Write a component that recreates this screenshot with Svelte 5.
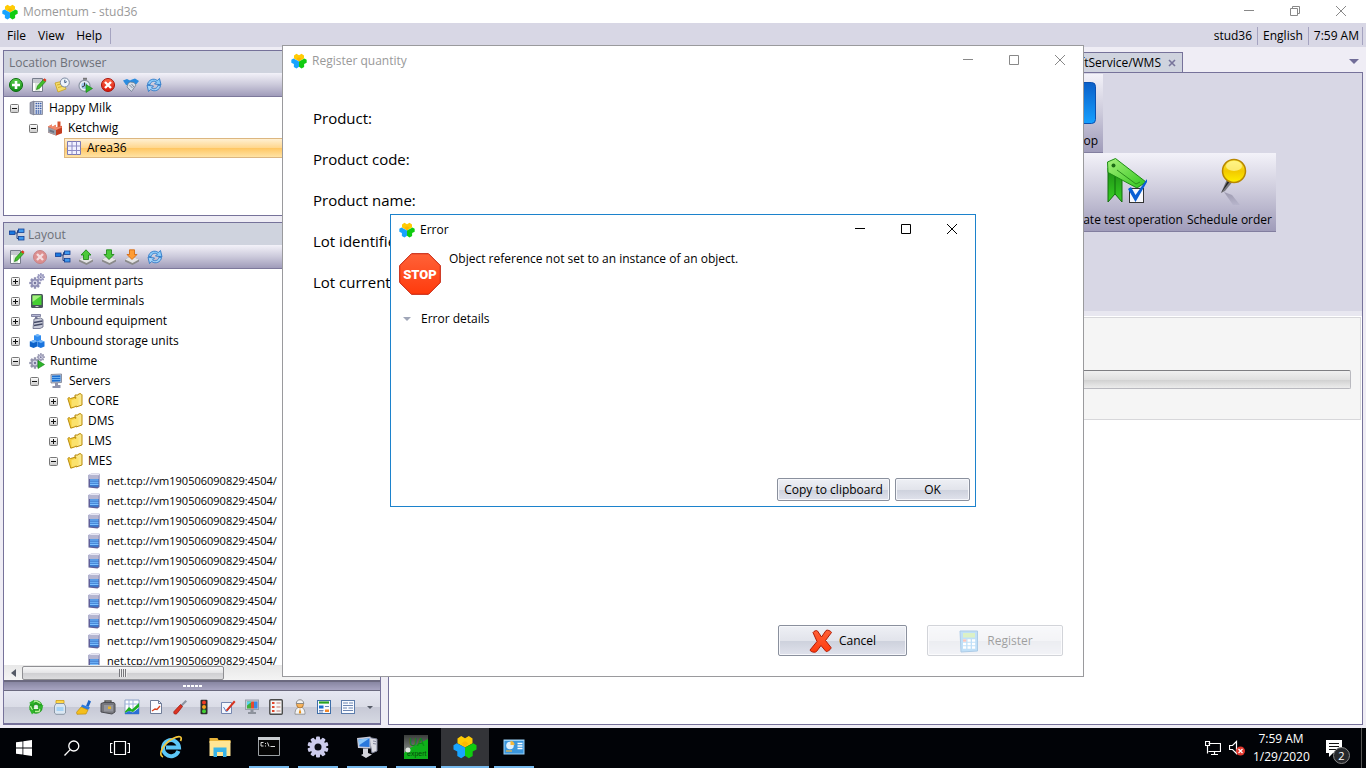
<script>
  const logo =
    '<path fill="#ffcb05" d="M4.500 3.600 8.200 1 12 3.200 15.800 1 19.500 3.600V8.200L12 12.600 4.500 8.200z"/>' +
    '<path fill="#18a4ff" d="M3.800 8.300 12 12.600V20.800L8.200 23.300 4.300 21V16.600L.5 14.500V10.300z"/>' +
    '<path fill="#10cc10" d="M20.200 8.300 12 12.600V20.800L15.800 23.300 19.700 21V16.600L23.500 14.500V10.300z"/>' +
    '<path fill="#f7a800" d="M8.500 8.300 12 6.300l3.500 2L12 12.600z" opacity=".5"/>';
  const gear = (cx, cy, r, c) => {
    let teeth = '';
    for (let a = 0; a < 360; a += 45) {
      teeth += `<rect x="${cx - r * 0.2}" y="${cy - r}" width="${r * 0.4}" height="${r * 2}" fill="${c}" transform="rotate(${a} ${cx} ${cy})"/>`;
    }
    return teeth + `<circle cx="${cx}" cy="${cy}" r="${r * 0.72}" fill="${c}"/><circle cx="${cx}" cy="${cy}" r="${r * 0.45}" fill="#d9d9ea"/><circle cx="${cx}" cy="${cy}" r="${r * 0.22}" fill="#77779c"/>`;
  };
  const tray =
    '<path d="M1 10.500 7 7l8 3.500v2L8.500 16 1 12.500z" fill="#8a8a8a"/><path d="M1 10.500 7 7l8 3.500L8.500 14z" fill="#e4e4e4"/>';

  const icons = {
    add: '<circle cx="8" cy="8" r="6.500" fill="url(#gGreen)" stroke="#0a6b0e"/><path d="M8 4v8M4 8h8" stroke="#fff" stroke-width="2.600"/>',
    edit: '<path d="M1.500 1.500h10v13h-10z" fill="#fff" stroke="#777d8c"/><path d="M2 3h9M2 5h9" stroke="#8a90a0"/><path d="M4 6h5v8H4z" fill="#dfeadf"/><path d="M5.500 12.500 6.500 9l6-6.500 2.200 2L8.500 11.300z" fill="#43c02a" stroke="#1c7d14" stroke-width=".7"/><path d="m12 3 1.500-1.800 2 1.800L14 4.700z" fill="#e2361c"/>',
    noteClock: '<path d="m1 6 8-2 3 8-8 3z" fill="#f5dc6a" stroke="#c9a21e" stroke-width=".8"/><path d="m3 8 6-1.500M4 10.500l6-1.500" stroke="#c9a21e" stroke-width=".8"/><circle cx="10.800" cy="5.500" r="4.500" fill="#eef4fb" stroke="#7d8ba3"/><path d="M10.800 2.800v2.900l2-1" stroke="#36557f" fill="none"/>',
    timer: '<path d="M6 .8h4v2H6z" fill="#777"/><circle cx="7.500" cy="8.800" r="5.500" fill="#e9eef4" stroke="#8a94a3" stroke-width="1.200"/><circle cx="7.500" cy="8.800" r="3.200" fill="#9ec3e8"/><path d="M7.500 5.500v3.300L5 10" stroke="#333" fill="none"/><path d="m9 7.500 6.500 4L9 15.500z" fill="#2fb52a" stroke="#0e7d12" stroke-width=".6"/>',
    remove: '<circle cx="8" cy="8" r="6.500" fill="url(#gRed)" stroke="#a9120a"/><path d="m5 5 6 6m0-6-6 6" stroke="#fff" stroke-width="2.400"/>',
    removeOff: '<circle cx="8" cy="8" r="6.500" fill="#dd8f8f" stroke="#c58287"/><path d="m5 5 6 6m0-6-6 6" stroke="#f4dcdf" stroke-width="2.400"/>',
    shake: '<path d="M0 3.500 4 2l3 1.500L9 2.500l3-1L16 4l-2.500 3-3 .5-4 1L3 8z" fill="#2b8ce0"/><path d="M5 6.500 7 5l4 .5 2 2.500-4.500 6.500L4 10z" fill="#d7dde6" stroke="#667487" stroke-width=".7"/><path d="m6.500 8 3 3m-1-4 2.500 3" stroke="#667487" stroke-width=".8"/>',
    refresh: '<path d="M1.500 7.500C2 3 7.500.5 11.300 3.500L13.500 1.500 15 7.800 8.500 7l2-2C8 3.500 4.500 4.500 4 7.800z" fill="#8ccbf7" stroke="#1c6fc4" stroke-width=".8"/><path d="M14.500 8.500C14 13 8.500 15.500 4.700 12.500L2.500 14.500 1 8.200 7.500 9l-2 2c2.500 1.500 6 .5 6.500-2.800z" fill="#a5d4f8" stroke="#1c6fc4" stroke-width=".8"/>',
    building: '<path d="M2 2.500 6 1v14l-4-1.500z" fill="#9a9fb2" stroke="#6b7085" stroke-width=".6"/><path d="M6 1.500h8.500v13H6z" fill="#eceef4" stroke="#777c90" stroke-width=".8"/><path d="M7.500 3.500h6M7.500 6h6M7.500 8.500h6M7.500 11h6M7.500 13h6" stroke="#3c5fa8" stroke-width="1.500" stroke-dasharray="1.600 .6"/>',
    factory: '<path d="M10.500 1.500h3V8h-3z" fill="#d4522f"/><path d="m1 6.500 4-2v2.300l4-2v2.400l6-1.500v5.500L9 15.500l-8-3z" fill="#e0603f"/><path d="m1 7 8 3v5.500l-8-3z" fill="#9c9ea8"/><path d="m9 10 6-2.300v5.500l-6 2.300z" fill="#c33c1f"/><path d="m1 6.500 4-2v2.300l4-2v2.400l6-.2L9 10z" fill="#f08a6c"/><path d="M2.500 9.500 7 11v2l-4.500-1.500z" fill="#6d7180"/>',
    grid: '<path d="M1.500 1.500h13v13h-13z" fill="#f1f1ff" stroke="#7c7ab4"/><path d="M6 1.500v13M10.500 1.500v13M1.500 6h13M1.500 10.500h13" stroke="#8e8cc4"/>',
    nodes: '<path d="M6 6h2.500V3.500H10M8 6v5.500h2" fill="none" stroke="#26427c"/><rect x=".5" y="4" width="5.500" height="3.500" fill="#1a78e0" stroke="#123f94" stroke-width=".8"/><rect x="9.500" y="2" width="5.500" height="3.500" fill="#3f98ee" stroke="#123f94" stroke-width=".8"/><rect x="9.500" y="9.500" width="5.500" height="3.500" fill="#3f98ee" stroke="#123f94" stroke-width=".8"/>',
    trayUp: tray + '<path d="M8 .8 13 6H10.500v4.500H5.500V6H3z" fill="#4cc93a" stroke="#14810f" stroke-width=".8"/>',
    trayDown: tray + '<path d="M8 10.500 13 5.500h-2.500V.8h-5v4.700H3z" fill="#4cc93a" stroke="#14810f" stroke-width=".8"/>',
    trayOrange: tray + '<path d="M8 10.500 13 5.500h-2.500V.8h-5v4.700H3z" fill="#ff9c33" stroke="#d06306" stroke-width=".8"/>',
    gears: gear(6, 10, 5.500, '#8f8fb4') + gear(11.800, 4.200, 3.900, '#9d9dc2'),
    gearsRun: gear(6, 10, 5.500, '#9495ad') + gear(11.800, 4.200, 3.900, '#a0a0b8') + '<path d="m9 7.500 6.500 4L9 15.500z" fill="#2fb52a" stroke="#0e7d12" stroke-width=".6"/>',
    mobile: '<rect x="2" y="1" width="12" height="14" rx="1.500" fill="#4a525c"/><rect x="3.500" y="2.500" width="9" height="9.500" fill="#45cf32"/><path d="M3.500 2.500h9L3.500 9z" fill="#a4f07e"/><path d="M6.500 13.500h3" stroke="#ccc"/>',
    valve: '<path d="M2.500 1.500h9v2h-9z" fill="#b4b6d4" stroke="#6d7092" stroke-width=".8"/><path d="M6 3.500h2.500V6H6z" fill="#777a9a"/><path d="M5 6 11.500 5 14 6.500v7.500L11 15.500H4z" fill="#c9ccda" stroke="#5f6380" stroke-width=".8"/><path d="M5 9.500 13.500 8M5 12.500 13.500 11" stroke="#444a66" stroke-width="1.300"/>',
    cubes: '<path d="m5 2.500 3.500-1.300 3.500 1.300V7L8.500 8.500 5 7z" fill="#2f8cf0"/><path d="m.8 8.500 3.700-1.300 3.700 1.300v5L4.500 15 .8 13.500z" fill="#0d62c8"/><path d="m8.300 8.500 3.500-1.300 3.700 1.300v5L11.800 15l-3.500-1.500z" fill="#1a74de"/><path d="m5 2.500 3.500-1.300 3.500 1.300-3.500 1.300zM.8 8.500l3.700-1.300 3.700 1.300-3.700 1.400zM8.300 8.500l3.500-1.300 3.700 1.300-3.700 1.400z" fill="#6fb4f8"/>',
    monitor: '<path d="M3 1.500 13.500 1v8.500L3 10z" fill="#ccd0dc" stroke="#767c90" stroke-width=".8"/><path d="M4 2.600 12.500 2.200v6.200L4 8.800z" fill="#1b6fd0"/><path d="M4 4.500h8.500M4 6.500h8.500" stroke="#7fc0f8" stroke-width=".8"/><path d="M7 10h3v2h2.500v3H4.500v-2H7z" fill="#9094ac"/>',
    folder: '<path d="M8 4V2h3l.8-1.200H14l1 1V12L9 14z" fill="#fce98a" stroke="#b88a0c"/><path d="M.8 5.500 2 4.500l1.500 1L8.800 4v9.500l-5 1.700z" fill="#f6cf3a" stroke="#b88a0c"/><path d="m4.500 7 7-2v7l-7 2z" fill="#fbe26c"/>',
    server: '<path d="M2.500 2 5 .8h8.500V14l-2 1.500-9-1z" fill="#5f5f98"/><path d="M2.500 2 5 .8h8.500L12.800 2.500z" fill="#e6e6f4"/><path d="M2.500 2h10.300v4H2.500z" fill="#b4b5d0"/><path d="M4 6h8.500v8l-8.500-.5z" fill="#3b78cc"/><path d="M4 7h8.500M4 9.200h8.500M4 11.400h8.500" stroke="#7cc0ff" stroke-width="1.100"/>',
    recycle: '<circle cx="8" cy="8" r="4.500" fill="none" stroke="#25a020" stroke-width="4.500"/><path d="M3 4.500 8 2l4.500 2.500M13 8l-2 4.500H7M2.500 7l2 4.500" fill="none" stroke="#b8f49a" stroke-width="1.300"/><path d="M1 4 6 .8 5.500 6zM15.500 6l-3 5-2.500-4zM4 15.500 1 9.500 7 12z" fill="#2fb52a"/><path d="m8 6 2.500 4h-5z" fill="#e8fbe0"/>',
    jar: '<path d="M4 1.500h8v3H4z" fill="#ffd84a" stroke="#d19e12" stroke-width=".8"/><path d="M4 4.500h8L13.500 7v7l-1.500 1.300H4L2.500 14V7z" fill="#dbe7f2" stroke="#7a8796" stroke-width=".8"/><path d="M4.500 8h7v4h-7z" fill="#a6d2f4"/>',
    brush: '<path d="m10 7 2.500-6L15 2.500 12.500 8z" fill="#1a64c8"/><path d="m6 5.500 8 3L12 11 5 8z" fill="#2b7ce0"/><path d="M5 8l7 3-2 4-9 .3-.5-2z" fill="#f4be1c" stroke="#b58509" stroke-width=".6"/>',
    briefcase: '<path d="M5 4V2h6v2" stroke="#555" fill="none" stroke-width="1.400"/><path d="M1 4.500 4 3.500h10l1 1.500v8L12 15 1 13z" fill="#77787e" stroke="#4c4d52"/><path d="M4 6h9v6.500H4z" fill="#94959c"/><path d="M8 7.500h3V10H8z" fill="#e8b427"/>',
    chart: '<path d="M1 1h14v14H1z" fill="#fff" stroke="#8ea2c8"/><path d="M5 1v14M9 1v14M1 5h14" stroke="#9db4dc"/><path d="M1 12.500 5 8l3 2.500L15 4v4L9 13l-4-1-4 2z" fill="#1fae24"/><path d="m1 14 4-2 4 1.500L15 9v6H1z" fill="#2a6fd4"/>',
    report: '<path d="M2.500 1.500h8l3 3v10h-11z" fill="#fafcff" stroke="#6f7c98"/><path d="M10.500 1.500v3h3" fill="none" stroke="#6f7c98"/><path d="m4 12 3-2 2 .5L12 7" stroke="#d9401c" stroke-width="1.300" fill="none"/>',
    driver: '<path d="m8.500 6 5-5 1.500 1.500-5 5z" fill="#8d94a0"/><path d="M2 12.500 8.500 5.500l2 2L5 14.500c-2 1.500-4 0-3-2z" fill="#dc3322" stroke="#9a1208" stroke-width=".7"/>',
    traffic: '<rect x="4.500" y=".8" width="7" height="14.500" rx="1" fill="#2b2d2b"/><circle cx="8" cy="3.600" r="2" fill="#f03a22"/><circle cx="8" cy="8" r="2" fill="#f8a41e"/><circle cx="8" cy="12.300" r="2" fill="#43cf34"/>',
    sign: '<path d="M1.500 3.500h10v11h-10z" fill="#f4f7fd" stroke="#7587b0"/><path d="m3.500 8 3 5 4-5" fill="none" stroke="#5b84c8"/><path d="m5.500 11.500 8.500-10 1.500 1.500L7.500 12z" fill="#d8321e"/>',
    palette: '<rect x="1.500" y="1" width="13" height="9.500" fill="#c7cbd4" stroke="#9a9fab"/><path d="M3 2.500h4v7H3z" fill="#3fae3a"/><path d="M7 2.500h3v7H7z" fill="#e84a2c"/><path d="M10 2.500h3.500v7H10z" fill="#3b87e4"/><path d="M3 2.500h5l-5 4z" fill="#58d4ee"/><path d="M6.500 10.500h3v2.500H12v2H4v-2h2.500z" fill="#8d929c"/>',
    checklist: '<rect x="1.800" y=".8" width="12.500" height="14.500" rx="1" fill="#f6f6f6" stroke="#4b4b4b" stroke-width="1.400"/><path d="M4 4h2.500M4 8h2.500M4 12h2.500" stroke="#e0462c" stroke-width="2"/><path d="M8.500 4h4M8.500 8h4M8.500 12h4" stroke="#c07b72" stroke-width="1.200"/>',
    worker: '<path d="M3 15.200c0-5 2-7 5-7s5 2 5 7z" fill="#f4f4f4" stroke="#888" stroke-width=".8"/><circle cx="8" cy="5.500" r="3.400" fill="#f6b25c" stroke="#9c6420" stroke-width=".7"/><path d="M4.200 4.500C4.500-.5 11.500-.5 11.800 4.500z" fill="#f2f2f2" stroke="#777" stroke-width=".8"/><path d="m8 9.500-1.200 4L8 15l1.200-1.500z" fill="#e89019"/>',
    form: '<rect x="1.500" y="1.500" width="13" height="13" fill="#f9fbff" stroke="#3e6ea8"/><path d="M3 3.500h10" stroke="#27a21f" stroke-width="2.200"/><path d="M3 6.500h4.500v3H3z" fill="#1b6fd0"/><path d="M9 7.500h4M3 11.500h4.500M3 13h4" stroke="#6c86b4"/><path d="M9 10.500h4V13H9z" fill="#f0872c"/>',
    doc: '<rect x="1.500" y="1.500" width="13" height="13" fill="#f9fbff" stroke="#5c7cab"/><path d="M3 4h5m1 0h4M3 6.500h10M3 9h4m1.500 0H13M3 11.500h10" stroke="#6d86b2" stroke-width="1.200"/>'
  };

  const locationTools = [['add', 'Add'], ['edit', 'Edit'], ['noteClock', 'Schedule'], ['timer', 'Timer'], ['remove', 'Remove'], ['shake', 'Bind'], ['refresh', 'Refresh']];
  const layoutTools = [['edit', 'Edit'], ['removeOff', 'Delete'], ['nodes', 'Layout'], ['trayUp', 'Upload'], ['trayDown', 'Download'], ['trayOrange', 'Import'], ['refresh', 'Refresh']];
  const moduleTools = ['recycle', 'jar', 'brush', 'briefcase', 'chart', 'report', 'driver', 'traffic', 'sign', 'palette', 'checklist', 'worker', 'form', 'doc'];

  const locations = [
    { depth: 0, open: true, icon: 'building', text: 'Happy Milk' },
    { depth: 1, open: true, icon: 'factory', text: 'Ketchwig' },
    { depth: 2, leaf: true, icon: 'grid', text: 'Area36', selected: true }
  ];
  const layout = [
    { depth: 0, icon: 'gears', text: 'Equipment parts' },
    { depth: 0, icon: 'mobile', text: 'Mobile terminals' },
    { depth: 0, icon: 'valve', text: 'Unbound equipment' },
    { depth: 0, icon: 'cubes', text: 'Unbound storage units' },
    { depth: 0, open: true, icon: 'gearsRun', text: 'Runtime' },
    { depth: 1, open: true, icon: 'monitor', text: 'Servers' },
    { depth: 2, icon: 'folder', text: 'CORE' },
    { depth: 2, icon: 'folder', text: 'DMS' },
    { depth: 2, icon: 'folder', text: 'LMS' },
    { depth: 2, open: true, icon: 'folder', text: 'MES' },
    ...Array.from({ length: 10 }, () => ({ depth: 3, leaf: true, address: true, icon: 'server', text: 'net.tcp://vm190506090829:4504/' }))
  ];
  const fields = ['Product:', 'Product code:', 'Product name:', 'Lot identifier:', 'Lot current:'];
</script>

{#snippet icon(name)}
  <svg class="i16" viewBox="0 0 16 16" aria-hidden="true">{@html icons[name]}</svg>
{/snippet}

{#snippet brand(cls)}
  <svg class={cls} viewBox="0 0 24 24" aria-hidden="true">{@html logo}</svg>
{/snippet}

{#snippet controls(restore)}
  <div class="controls">
    <button aria-label="Minimize"><svg viewBox="0 0 12 12"><path d="M1 5.500h10" /></svg></button>
    <button aria-label="Maximize">
      <svg viewBox="0 0 12 12">
        {#if restore}<path d="M1.500 3.500h7v7h-7zM3.500 3.500v-2h7v7h-2" />{:else}<path d="M1.500 1.500h9v9h-9z" />{/if}
      </svg>
    </button>
    <button aria-label="Close"><svg viewBox="0 0 12 12"><path d="m1 1 10 10M11 1 1 11" /></svg></button>
  </div>
{/snippet}

{#snippet tree(rows, label)}
  <ul class="tree" aria-label={label}>
    {#each rows as row}
      <li style="padding-left: {row.depth * 19 + 6}px">
        {#if row.leaf}
          <span class="twist"></span>
        {:else}
          <button class="twist" aria-label={row.open ? 'Collapse' : 'Expand'}>
            <svg viewBox="0 0 9 9"><rect x=".5" y=".5" width="8" height="8" rx="1" fill="url(#gBox)" stroke="#777" /><path d={row.open ? 'M2 4.500h5' : 'M2 4.500h5M4.500 2v5'} stroke="#111" /></svg>
          </button>
        {/if}
        <span class="node" class:selected={row.selected} class:address={row.address}>{@render icon(row.icon)}<span>{row.text}</span></span>
      </li>
    {/each}
  </ul>
{/snippet}

<svg class="defs" aria-hidden="true">
  <defs>
    <linearGradient id="gGreen" x2="0" y2="1"><stop stop-color="#5fd24c" /><stop offset="1" stop-color="#0b8a12" /></linearGradient>
    <linearGradient id="gRed" x2="0" y2="1"><stop stop-color="#ff6a4a" /><stop offset="1" stop-color="#d81408" /></linearGradient>
    <linearGradient id="gStop" x2="0" y2="1"><stop stop-color="#ff6238" /><stop offset="1" stop-color="#ff3a0c" /></linearGradient>
    <linearGradient id="gBox" x2="0" y2="1"><stop stop-color="#fff" /><stop offset="1" stop-color="#c8c8c8" /></linearGradient>
    <linearGradient id="gTag" x2="1" y2="1"><stop stop-color="#a5f07a" /><stop offset="1" stop-color="#2fc61c" /></linearGradient>
    <linearGradient id="gTag2" x2="0" y2="1"><stop stop-color="#1c8c14" /><stop offset="1" stop-color="#38d024" /></linearGradient>
    <linearGradient id="gPin" x2="0" y2="1"><stop stop-color="#fff04a" /><stop offset=".5" stop-color="#f2c800" /><stop offset="1" stop-color="#fff000" /></linearGradient>
    <linearGradient id="gShade" x2="0" y2="1"><stop stop-color="#77748c" /><stop offset="1" stop-color="#b2b0c8" /></linearGradient>
    <linearGradient id="gBlue" x2="0" y2="1"><stop stop-color="#0a5fc8" /><stop offset="1" stop-color="#16a0ff" /></linearGradient>
    <linearGradient id="gUa" x2="0" y2="1"><stop stop-color="#3a3d3b" /><stop offset="1" stop-color="#a4aca6" /></linearGradient>
  </defs>
</svg>

<div class="screen">
  <header class="titlebar main-title">
    {@render brand('brand')}
    <span>Momentum - stud36</span>
    {@render controls(true)}
  </header>

  <nav class="menubar">
    <button>File</button><button>View</button><button>Help</button><i></i>
    <span class="status"><span>stud36</span><span>English</span><span>7:59 AM</span></span>
  </nav>

  <main class="workspace">
    <div class="side">
      <section class="panel location">
        <h2>Location Browser</h2>
        <div class="tools">
          {#each locationTools as [name, label]}<button aria-label={label}>{@render icon(name)}</button>{/each}
        </div>
        {@render tree(locations, 'Locations')}
      </section>

      <section class="panel layout">
        <h2>{@render icon('nodes')}Layout</h2>
        <div class="tools">
          {#each layoutTools as [name, label]}<button aria-label={label}>{@render icon(name)}</button>{/each}
        </div>
        {@render tree(layout, 'Layout')}
        <div class="scrollbar"><span class="arrow"></span><span class="thumb"><i></i></span></div>
        <div class="splitter"><i></i></div>
        <div class="modules">
          {#each moduleTools as name}<button aria-label={name}>{@render icon(name)}</button>{/each}
          <span class="more"></span>
        </div>
      </section>
    </div>

    <section class="document">
      <div class="tabs">
        <div class="tab">ftService/WMS<button aria-label="Close tab"><svg viewBox="0 0 8 8"><path d="m1 1 6 6M7 1 1 7" /></svg></button></div>
        <span class="tablist"></span>
      </div>
      <div class="page">
        <div class="ribbon">
          <div class="group first">
            <button>
              <svg class="i48" viewBox="0 0 48 48"><rect x="3.500" y="3.500" width="41" height="41" rx="4" fill="url(#gBlue)" stroke="#0a50b0" /></svg>
              Desktop
            </button>
          </div>
          <div class="group second">
            <button>
              <svg class="i48" viewBox="-5 0 48 48">
                <path d="M4 10v34l7-8 7 8V22z" fill="url(#gTag2)" stroke="#126e0c" />
                <path d="M11 36V18" stroke="#0e6c0c" />
                <path d="m3.500 4 8-3.500L42 24l-9 6L4 14.500z" fill="url(#gTag)" stroke="#1c8c14" />
                <path d="m13 12 19 14 4-2" fill="none" stroke="#2b8e1d" />
                <circle cx="9.500" cy="7.500" r="2" fill="#1c6c16" />
                <rect x="25.500" y="30.500" width="14" height="14" fill="#f8f8fc" stroke="#333" />
                <path d="m24 31 3-2 4.500 8L42.500 21.500h2L31.500 44z" fill="#0a5fd4" />
              </svg>
              Create test operation
            </button>
            <button>
              <svg class="i48" viewBox="-5 0 48 48">
                <path d="m14 34 8 3 8 10h-7z" fill="url(#gShade)" opacity=".55" />
                <path d="m11 35 7-16 6 3-9 11z" fill="#77777c" />
                <path d="m11 35 8-14 2 1z" fill="#222" />
                <circle cx="24" cy="13" r="11.500" fill="url(#gPin)" stroke="#b88700" stroke-width="1.500" />
                <ellipse cx="24" cy="8" rx="8" ry="5" fill="#fff6a0" opacity=".7" />
              </svg>
              Schedule order
            </button>
          </div>
        </div>
        <div class="progress-box"><div class="progress" role="progressbar" aria-label="Progress" aria-valuenow="0"></div></div>
      </div>
    </section>
  </main>

  <footer class="taskbar">
    <button class="sys" aria-label="Start"><svg class="t16" viewBox="0 0 16 16"><path fill="#fff" d="M0 2.300 6.500 1.400v6.200H0zM7.300 1.300 16 0v7.600H7.300zM0 8.400h6.500v6.200L0 13.700zM7.300 8.400H16V16l-8.700-1.200z" /></svg></button>
    <button class="sys" aria-label="Search"><svg class="t16" viewBox="0 0 16 16"><g fill="none" stroke="#fff" stroke-width="1.300"><circle cx="9.800" cy="6" r="5" /><path d="M6.200 9.600.5 15.500" /></g></svg></button>
    <button class="sys" aria-label="Task view"><svg class="t20" viewBox="0 0 20 20"><path fill="none" stroke="#fff" stroke-width="1.200" d="M4.500 3.500h11v13h-11zM2.500 5.500h-2v9h2M17.500 5.500h2v9h-2" /></svg></button>
    <div class="apps">
      <button aria-label="Internet Explorer">
        <svg class="t24" viewBox="0 0 24 24"><path fill="none" stroke="#5cc8f8" stroke-width="4" d="M19.500 16A8 8 0 1 1 20 12.500H7" /><path fill="none" stroke="#f6c73a" stroke-width="1.700" d="M4 22C-2 20 5 8 14 3.500 20 .5 24 1 21.500 6" /></svg>
      </button>
      <button aria-label="File Explorer">
        <svg class="t24" viewBox="0 0 24 24"><path fill="#e8b43a" d="M1.500 3h8l1 2h12v3h-21z" /><path fill="#ffe594" d="M1.500 6h21v15h-21z" /><path fill="#38b4e8" d="M5.500 12.500h13V22H15v-5H9v5H5.500z" /></svg>
      </button>
      <button class="run" aria-label="Command Prompt">
        <svg class="t24" viewBox="0 0 24 24"><path fill="#050505" stroke="#9ba0a4" d="M1.500 2.500h21v18h-21z" /><path fill="#c8ccd0" d="M1 2h22v3H1z" /><path d="M6.500 7.500H4v3.500h2.500M8.500 8v1m0 1.500v1M10.500 7.500l1.500 4M13.500 11.500H18" stroke="#ddd" fill="none" /></svg>
      </button>
      <button class="run" aria-label="Services">
        <svg class="t24" viewBox="0 0 24 24"><g fill="#ccccec">{#each [0, 36, 72, 108, 144] as a}<rect x="10" y="1.500" width="4" height="21" rx="1" transform="rotate({a} 12 12)" />{/each}<circle cx="12" cy="12" r="8" /></g><circle cx="12" cy="12" r="3.500" fill="#0a0c14" /></svg>
      </button>
      <button class="run" aria-label="Remote desktop">
        <svg class="t24" viewBox="0 0 24 24"><path fill="#dcdce4" stroke="#83879c" d="m14 2.500 8 1.500v12L17 18z" /><path d="m18 6 3 .5M18 8.500l3 .5" stroke="#83879c" /><path fill="#c8cad8" d="M2 3 15.500 1.500v12L3 13z" /><path fill="#2a78dc" d="m3.500 4.500 11-1.200v8.700l-10-.5z" /><path fill="#8cc8fa" d="m3.500 4.500 11-1.200-10.500 7z" /><path fill="#d4d4dc" d="M8 13.500h5V18l4 1.500-6 3.500-5-3 2-1z" /></svg>
      </button>
      <button class="run" aria-label="UA Expert">
        <svg class="t24" viewBox="0 0 24 24"><path fill="url(#gUa)" d="M0 0h24v24H0z" /><path fill="#0fb01a" d="M24 4v20H0v-6l6-5z" /><text x="5" y="11" font-size="11" fill="#0b8a14" font-family="Liberation Sans, sans-serif">UA</text><text x="3" y="21" font-size="7" fill="#06470a" font-family="Liberation Sans, sans-serif">expert</text><circle cx="4" cy="15" r="2.500" fill="#e4e8e4" /></svg>
      </button>
      <button class="run active" aria-label="Momentum">{@render brand('t24')}</button>
      <button class="run" aria-label="Monitoring">
        <svg class="t24" viewBox="0 0 24 24"><path fill="#9ad2f8" d="M1.500 4.500h21v15h-21z" /><path fill="#3b96dc" d="M2.500 6h19v12.500h-19z" /><circle cx="8" cy="10.500" r="3.800" fill="#dff0fb" /><path fill="#f5b83c" d="M8.500 10v-4a4 4 0 0 1 4 4z" /><path d="M15.500 8.500h5M15.500 11h5M15.500 13.500h5" stroke="#fff" stroke-width="1.500" /><path d="M4 16h6" stroke="#f5b83c" stroke-width="1.200" /></svg>
      </button>
    </div>
    <div class="tray">
      <svg class="t16" viewBox="0 0 16 16"><path fill="none" stroke="#fff" stroke-width="1.200" d="M3.500 3.500h12v8h-12M.5 1.500h4v4h-4zM2.500 5.500v8M9.500 11.500v3M6 14.500h7" /></svg>
      <svg class="t16" viewBox="0 0 16 16"><path fill="none" stroke="#fff" stroke-width="1.200" d="M.5 5.500h3l4-4v12l-4-4h-3z" /><circle cx="11.500" cy="11" r="4.500" fill="#e2382e" /><path d="m9.500 9 4 4m0-4-4 4" stroke="#fff" stroke-width="1.200" /></svg>
      <time>7:59 AM<br />1/29/2020</time>
      <span class="notice">
        <svg class="t20" viewBox="0 0 20 20"><path fill="#fff" d="M1 2h16v13H8l-4 4v-4H1z" /><path d="M4 5.500h10M4 8.500h10M4 11.500h7" stroke="#111" /></svg>
        <b>2</b>
      </span>
      <i></i>
    </div>
  </footer>

  <section class="window register" role="dialog" aria-label="Register quantity">
    <header class="titlebar">
      {@render brand('brand')}
      <span>Register quantity</span>
      {@render controls(false)}
    </header>
    <div class="fields">
      {#each fields as field}<p>{field}</p>{/each}
    </div>
    <div class="actions">
      <button class="btn cancel">
        <svg class="t24" viewBox="0 0 24 24"><path fill="url(#gStop)" stroke="#b01c06" d="M4 3.500C5 2 7.500 1 8.500 2L12.500 8 17 1.500c1-1 5 .3 5.500 2L16.500 11.500 22 18.500c.5 1.500-3.500 4.500-5 4L12 16.500 7.500 22.500c-1.500 1.500-6 .5-6.500-1.500L8 12.500z" /></svg>
        Cancel
      </button>
      <button class="btn submit" disabled>
        <svg class="t24" viewBox="0 0 24 24"><path fill="#5cb0ee" stroke="#2a78c0" d="M3 2h17.500v20L4 23z" /><path fill="#a6dc6c" d="M6 4h12v4.500H6z" /><path stroke="#fff" stroke-width="2.400" stroke-dasharray="3.200 1.300" d="M6 11.500h13M6 15h13M6 18.500h13" /><path fill="#f06a50" d="M6 10.300h3.200v2.400H6z" /></svg>
        Register
      </button>
    </div>
  </section>

  <section class="window error" role="dialog" aria-label="Error">
    <header class="titlebar">
      {@render brand('brand')}
      <span>Error</span>
      {@render controls(false)}
    </header>
    <div class="message">
      <svg class="stop" viewBox="0 0 42 42" aria-hidden="true">
        <path d="M12.500.7h17L41.300 12.500v17L29.500 41.300h-17L.7 29.500v-17z" fill="url(#gStop)" stroke="#c41a04" />
        <text x="21" y="26" text-anchor="middle">STOP</text>
      </svg>
      <p>Object reference not set to an instance of an object.</p>
    </div>
    <details><summary>Error details</summary></details>
    <div class="confirm">
      <button class="btn copy">Copy to clipboard</button>
      <button class="btn ok">OK</button>
    </div>
  </section>
</div>

<style>
  :global(body) { margin: 0; background: #f0eff5; }
  .screen {
    position: relative;
    display: flex;
    flex-direction: column;
    height: 100vh;
    overflow: hidden;
    background: #efedf5;
    color: #000;
    font: 12px/16px "Open Sans", "Noto Sans", sans-serif;
  }
  h2, p, ul { margin: 0; padding: 0; }
  button { margin: 0; padding: 0; border: 0; background: none; color: inherit; font: inherit; }
  svg { display: block; flex: none; }
  .defs { position: absolute; width: 0; height: 0; }
  .i16, .t16, .brand { width: 16px; height: 16px; }
  .t20 { width: 20px; height: 20px; }
  .t24 { width: 24px; height: 24px; }
  .i48 { width: 48px; height: 48px; }

  .titlebar { display: flex; align-items: center; gap: 5px; height: 30px; padding-left: 8px; color: #999; background: #fff; }
  .main-title { height: 23px; padding: 0 2px; }
  .error .titlebar { color: #000; }
  .controls { display: flex; margin-left: auto; }
  .controls button { display: grid; place-items: center; width: 46px; height: 20px; padding-bottom: 2px; }
  .controls svg { width: 12px; height: 12px; fill: none; stroke: #888; }
  .error .controls svg { stroke: #000; }

  .menubar { display: flex; align-items: center; box-sizing: border-box; height: 24px; background: #d8d7e5; padding: 2px 3px 0 7px; }
  .menubar button { margin-right: 12px; }
  .menubar button:nth-of-type(3) { margin-right: 8px; }
  .menubar i { height: 16px; border-left: 1px solid #a5a3c0; }
  .status { display: flex; margin-left: auto; }
  .status span { padding: 1px 5px; border-right: 1px solid #a5a3c0; }
  .status span:last-child { padding-right: 3px; }

  .workspace { display: flex; flex: 1; gap: 7px; min-height: 0; padding: 3px; }
  .side { display: flex; flex-direction: column; flex: none; gap: 6px; width: 378px; }
  .panel { display: flex; flex-direction: column; box-sizing: border-box; border: 1px solid #76729a; background: #fff; }
  .location { height: 166px; }
  .layout { flex: 1; min-height: 0; }
  h2 { display: flex; align-items: center; gap: 3px; box-sizing: border-box; height: 22px; padding: 2px 0 0 5px; background: #cfd3de; color: #6d7078; font-size: 12px; font-weight: 400; }
  .tools { display: flex; align-items: center; gap: 7px; height: 23px; padding-left: 4px; background: linear-gradient(#f3f2f9, #cccadb 50%, #a09cba); border-bottom: 1px solid #7d799b; }
  .layout .tools { padding-left: 5px; }

  .tree { flex: 1; min-height: 0; overflow: hidden; padding-top: 1px; list-style: none; }
  .layout .tree { padding: 2px 0 0 1px; }
  .tree li { display: flex; align-items: center; height: 20px; white-space: nowrap; }
  .twist { width: 9px; height: 9px; margin-right: 7px; flex: none; }
  .twist svg { width: 9px; height: 9px; }
  .node { display: flex; flex: 1; align-items: center; gap: 5px; height: 18px; padding-left: 2px; }
  .selected { height: 18px; padding-left: 1px; border: 1px solid #dcb680; background: linear-gradient(#fff0d2, #ffd68c 50%, #ffc662 51%, #ffe3a4); }
  .address { font-size: 11px; }

  .scrollbar { display: flex; align-items: center; height: 15px; background: linear-gradient(#e8e8e8, #f4f4f4); }
  .arrow { width: 0; margin: 0 6px 0 7px; border: solid transparent; border-width: 4px 5px 4px 0; border-right-color: #555a66; }
  .thumb { display: grid; place-items: center; box-sizing: border-box; width: 202px; height: 14px; border: 1px solid #8f8f93; border-radius: 2px; background: linear-gradient(#f7f7f8, #e4e4e6 50%, #cfcfd2 51%, #dcdcde); }
  .thumb i { width: 8px; height: 8px; background: repeating-linear-gradient(90deg, #77777c 0 1px, #eee 1px 2px); }
  .splitter { display: grid; place-items: center; height: 8px; border: solid #6b697f; border-width: 2px 0 1px; background: linear-gradient(#8886a2, #a8a5c2); }
  .splitter i { width: 19px; height: 2px; background: repeating-linear-gradient(90deg, #fff 0 3px, transparent 3px 4px); }
  .modules { display: flex; align-items: center; gap: 8px; height: 32px; padding-left: 24px; border-bottom: 1px solid #76729a; background: linear-gradient(#e6e7f2, #dadce6 50%, #c7c9d6 51%, #d5d8e2); }
  .more { border: solid transparent; border-width: 3px 3px 0; border-top-color: #555a66; margin-left: 3px; }

  .document { display: flex; flex: 1; flex-direction: column; min-width: 0; }
  .tabs { display: flex; align-items: center; height: 22px; }
  .tab { display: flex; align-items: center; justify-content: flex-end; gap: 7px; box-sizing: border-box; width: 795px; height: 20px; margin-top: 2px; padding-right: 6px; border: 1px solid #76729a; border-bottom: 0; background: #cfd3de; }
  .tab svg { width: 8px; height: 8px; stroke: #77749a; stroke-width: 1.6; }
  .tablist { margin: 0 4px 0 auto; border: solid transparent; border-width: 5px 5px 0; border-top-color: #716d98; }
  .page { display: flex; flex: 1; flex-direction: column; border: 1px solid #76729a; background: #fff; }
  .ribbon { display: flex; flex-direction: column; align-items: flex-start; height: 238px; background: #d8d7e5; border-bottom: 5px solid #e8e7f0; }
  .group { display: flex; align-items: flex-end; justify-content: flex-end; gap: 4px; box-sizing: border-box; height: 79px; padding: 0 4px 3px; background: linear-gradient(#f3f2f9, #cccadb 50%, #a09cba); border-bottom: 1px solid #827e9f; }
  .group button { display: flex; flex-direction: column; align-items: center; gap: 7px; white-space: nowrap; }
  .group svg { margin-bottom: -1px; }
  .first { width: 714px; margin-top: 1px; }
  .second { width: 887px; }
  .progress-box { display: flex; align-items: center; box-sizing: border-box; height: 103px; margin: 1px; padding: 22px 9px 0; border: 1px solid #d7d7da; background: #f5f5f5; }
  .progress { flex: 1; box-sizing: border-box; height: 19px; border: 1px solid #b9b9bf; border-top-color: #7e7e82; border-radius: 2px; background: linear-gradient(#f0f0f0, #e0e0e0 50%, #d0d0d0 51%, #ececec); }

  .window { position: absolute; display: flex; flex-direction: column; box-sizing: border-box; background: #fff; border: 1px solid #9a9a9d; }
  .register { top: 45px; left: 282px; width: 802px; height: 632px; }
  .error { top: 214px; left: 390px; width: 586px; height: 293px; border-color: #1c82cc; }
  .fields { padding: 32px 30px; font-size: 15px; line-height: 20px; }
  .fields p { margin-bottom: 21px; }
  .actions { display: flex; gap: 20px; justify-content: flex-end; margin-top: auto; padding: 0 20px 20px; }
  .btn { display: flex; align-items: center; justify-content: center; gap: 6px; box-sizing: border-box; border: 1px solid #8a909d; border-radius: 2px; background: linear-gradient(#eef0f5, #e2e4eb 50%, #cdd1dc 51%, #e0e2ec); box-shadow: inset 0 0 0 1px #f6f7fb; white-space: nowrap; }
  .cancel { width: 129px; height: 31px; }
  .submit { width: 136px; height: 31px; opacity: 0.38; }

  .message { display: flex; gap: 8px; padding: 8px 8px 0; }
  .message p { line-height: 12px; }
  .stop { width: 42px; height: 42px; }
  .stop text { fill: #fff; font: 900 13px Roboto, sans-serif; }
  details { padding: 16px 12px; }
  summary { display: flex; align-items: center; gap: 10px; list-style: none; }
  summary::before { content: ""; border: solid transparent; border-width: 4px 4px 0; border-top-color: #a0a6b8; }
  .confirm { display: flex; gap: 5px; justify-content: flex-end; margin-top: auto; padding: 0 5px 5px; }
  .confirm .btn { height: 23px; }
  .copy { width: 113px; }
  .ok { width: 75px; }

  .taskbar { display: flex; height: 40px; background: #010307; color: #fff; }
  .taskbar button { display: grid; place-items: center; width: 48px; }
  .apps { display: flex; gap: 9px; margin-left: 7px; }
  .taskbar .apps button { box-sizing: border-box; width: 40px; border-bottom: 2px solid transparent; }
  .taskbar .apps .run { border-bottom-color: #76b9ed; }
  .taskbar .apps .active { width: 48px; margin: 0 -4px; background: #333438; }
  .tray { display: flex; align-items: center; margin-left: auto; gap: 8px; }
  time { width: 56px; text-align: center; line-height: 18px; }
  .notice { position: relative; margin: 0 8px 0 8px; }
  .notice b { position: absolute; left: 8px; top: 9px; width: 15px; height: 15px; border: 1px solid #888; border-radius: 50%; background: #26282c; font-size: 11px; line-height: 15px; font-weight: 400; text-align: center; }
  .tray i { height: 40px; width: 4px; border-left: 1px solid #555; }
</style>
